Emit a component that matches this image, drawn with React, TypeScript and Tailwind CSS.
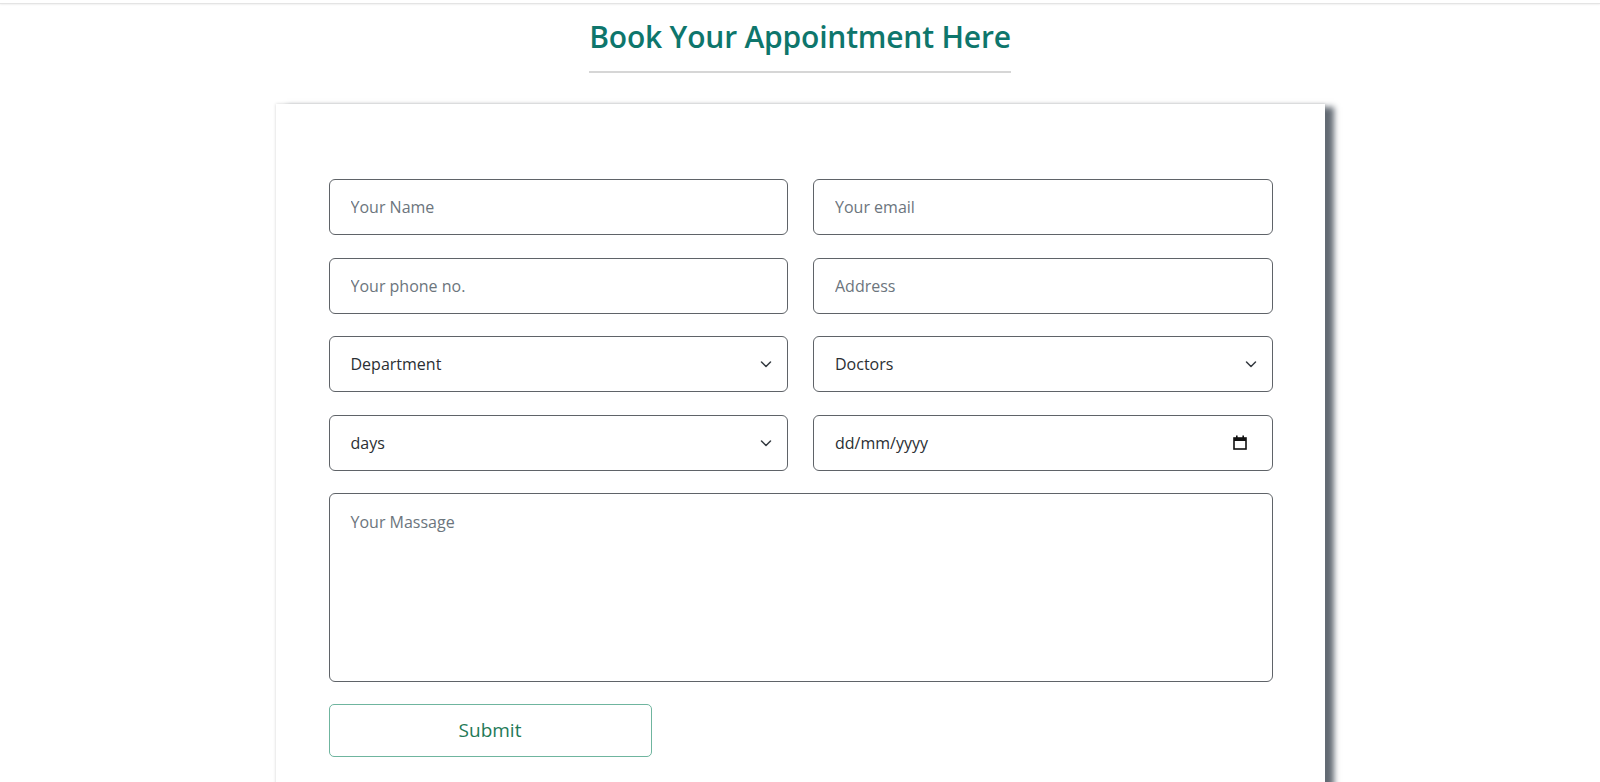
import React from "react";

const Chevron = () => (
  <svg width="16" height="16" viewBox="0 0 16 16" className="shrink-0">
    <path d="m3.5 6 4.5 4.5 4.5-4.5" fill="none" stroke="#343a40" strokeWidth="1.5" strokeLinecap="round" strokeLinejoin="round" />
  </svg>
);

const Calendar = () => (
  <svg width="14" height="15" viewBox="0 0 14 15" className="shrink-0">
    <rect x="1" y="3" width="12" height="11" fill="none" stroke="#111" strokeWidth="1.6" />
    <rect x="1" y="3" width="12" height="3" fill="#111" />
    <rect x="3" y="0.5" width="1.6" height="3" fill="#111" />
    <rect x="9.4" y="0.5" width="1.6" height="3" fill="#111" />
  </svg>
);

const box =
  "h-[56px] w-full rounded-[6px] border border-[#5f6368] bg-white px-[21px] text-[16px] flex items-center";

const Input = ({ ph }: { ph: string }) => (
  <input
    placeholder={ph}
    className={`${box} outline-none text-[#212529] placeholder:text-[#6c757d]`}
  />
);

const Select = ({ label }: { label: string }) => (
  <div className={`${box} justify-between pr-[13px] text-[#2b2f33]`}>
    <span>{label}</span>
    <Chevron />
  </div>
);

export default function App() {
  return (
    <div
      className="min-h-[782px] bg-white flex flex-col items-center"
      style={{ fontFamily: '"Open Sans", "Noto Sans", sans-serif' }}
    >
      <div className="w-full h-[4px] border-b border-[#e4e4e4] shadow-[0_1px_2px_rgba(0,0,0,0.06)]" />
      <div className="mt-[13px] inline-block border-b-2 border-[#d6d6d6] pb-[14px]">
        <h1 className="text-[30px] leading-[40px] font-semibold text-[#0e766c] tracking-[-0.2px]">
          Book Your Appointment Here
        </h1>
      </div>
      <div className="mt-[31px] w-[1049px] bg-white pt-[75px] pl-[53px] pr-[52px] pb-[40px] shadow-[10px_2px_6px_-1px_rgba(90,98,108,0.95),0_0_3px_rgba(0,0,0,0.18)]">
        <div className="grid grid-cols-2 gap-x-[25px] gap-y-[22.5px]">
          <Input ph="Your Name" />
          <Input ph="Your email" />
          <Input ph="Your phone no." />
          <Input ph="Address" />
          <Select label="Department" />
          <Select label="Doctors" />
          <Select label="days" />
          <div className={`${box} justify-between pr-[25px] text-[#2b2f33]`}>
            <span>dd/mm/yyyy</span>
            <Calendar />
          </div>
          <textarea
            placeholder="Your Massage"
            className="col-span-2 h-[189px] resize-none rounded-[6px] border border-[#5f6368] px-[21px] py-[16px] text-[16px] leading-[24px] outline-none placeholder:text-[#6c757d]"
          />
        </div>
        <button className="mt-[22px] h-[53px] w-[323px] rounded-[5px] border border-[#6fb59f] text-[19px] text-[#1f7a57] bg-white">
          Submit
        </button>
      </div>
    </div>
  );
}
